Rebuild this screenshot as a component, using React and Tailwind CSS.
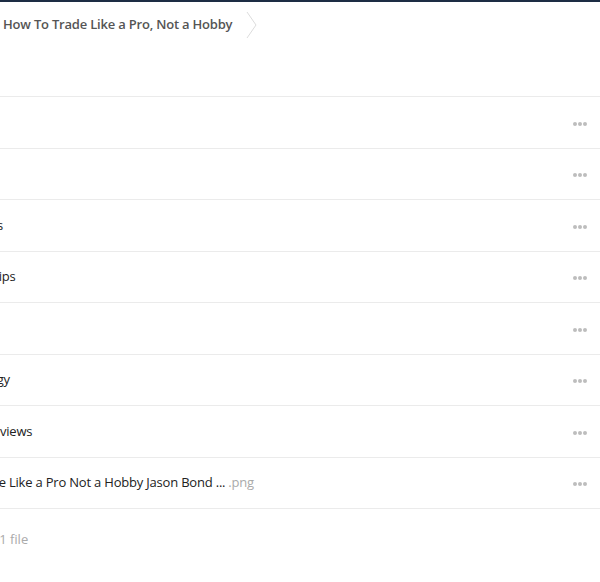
import React from 'react';

const ROWS = [
  { name: 'Charts' },
  { name: 'Notes' },
  { name: 'Trading Ideas' },
  { name: 'Daytrading Tips' },
  { name: 'Webinars' },
  { name: 'Swing Strategy' },
  { name: 'Customer Reviews' },
  { name: 'How To Trade Like a Pro Not a Hobby Jason Bond ...', ext: '.png' },
];

function Dots() {
  return (
    <div className="flex items-center gap-[1px] pr-[13px] pt-[3px]">
      <span className="w-[4px] h-[4px] rounded-full bg-[#bdbdbd]" />
      <span className="w-[4px] h-[4px] rounded-full bg-[#bdbdbd]" />
      <span className="w-[4px] h-[4px] rounded-full bg-[#bdbdbd]" />
    </div>
  );
}

export default function App() {
  return (
    <div
      className="w-[600px] h-[582px] overflow-hidden bg-white"
      style={{ fontFamily: '"Open Sans", "Noto Sans", sans-serif' }}
    >
      <div className="h-[2px] bg-[#1d2d44]" />

      {/* breadcrumb */}
      <div className="flex items-center h-[46px] pl-[3px]">
        <span className="text-[13px] font-semibold text-[#555] tracking-[-0.2px]">
          How To Trade Like a Pro, Not a Hobby
        </span>
        <svg width="12" height="28" viewBox="0 0 12 28" className="ml-[14px]">
          <path d="M1 1 L10 14 L1 27" fill="none" stroke="#dcdcdc" strokeWidth="1" />
        </svg>
      </div>

      <div className="h-[48px]" />

      <div className="border-t border-[#ebebeb]">
        {ROWS.map((row, i) => (
          <div
            key={i}
            className="flex items-center justify-between h-[51.5px] border-b border-[#ebebeb]"
          >
            <div className="ml-[-76px] whitespace-nowrap text-[13px] tracking-[-0.2px] text-[#222]">
              {row.name}
              {row.ext && <span className="ml-[3px] text-[#aaa]">{row.ext}</span>}
            </div>
            <Dots />
          </div>
        ))}
      </div>

      <div className="h-[62px] flex items-center">
        <span className="ml-[-31px] text-[13px] text-[#aaa] whitespace-nowrap">Files 1 file</span>
      </div>
    </div>
  );
}
